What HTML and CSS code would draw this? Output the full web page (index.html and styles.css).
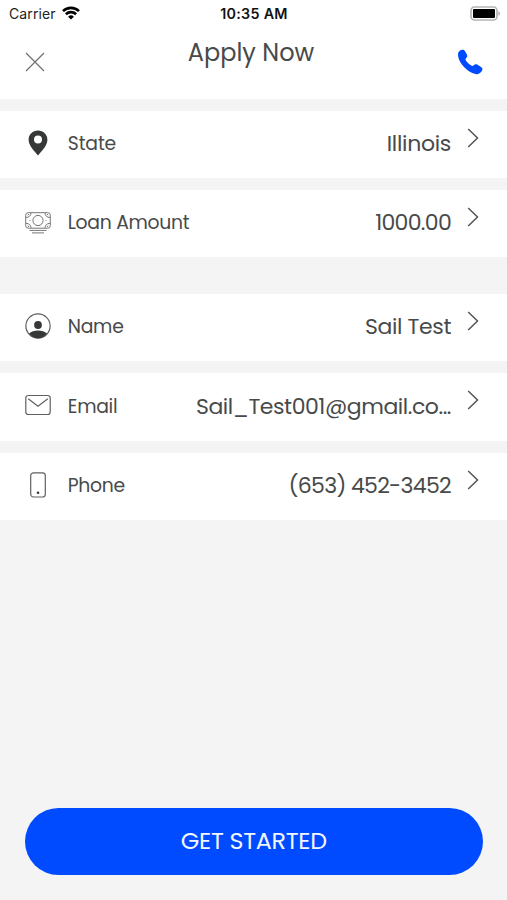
FILE: index.html
```html
<!DOCTYPE html>
<html lang="en">
<head>
<meta charset="utf-8">
<title>Apply Now</title>
<link rel="stylesheet" href="styles.css">
</head>
<body>
<svg class="defs" aria-hidden="true"><symbol id="chevron" viewBox="0 0 12 20"><path d="M1.2 1l9.3 9-9.3 9"/></symbol></svg>
<main class="screen">
  <header class="header">
    <div class="status">
      <span class="carrier">Carrier
        <svg class="wifi" viewBox="0 0 18 14"><path d="M9 13.6L6.1 10.700a4.200 4.200 0 0 1 5.800 0z"/><path class="arc" d="M3.900 8.200a7.300 7.300 0 0 1 10.200 0M1 5.100a11.500 11.500 0 0 1 16 0"/></svg>
      </span>
      <span class="clock">10:35 AM</span>
      <svg class="battery" viewBox="0 0 31 16"><rect x="1" y="1" width="26" height="13" rx="3.5" fill="#fff" stroke="#b5b5b5" stroke-width="1.7"/><rect x="3" y="3" width="22" height="9" rx="1" fill="#000"/><path d="M28.3 5.2c2.4.8 2.4 3.8 0 4.6z" fill="#b5b5b5"/></svg>
    </div>
    <div class="toolbar">
      <svg class="close" viewBox="0 0 20 20"><path d="M1 1l18 18M19 1L1 19"/></svg>
      <h1 class="title">Apply Now</h1>
      <svg class="call" viewBox="0 0 26 26"><path d="M1 5C1 3 3 1 4.800.8C6.200.5 7.300 1 7.900 2L10 5.700C10.600 7 10.200 8 9.200 9C8.400 9.900 8.300 10.500 8.900 11.500C10.300 13.600 12 15.200 14.300 16.600C15.200 17.200 15.900 17.100 16.700 16.300C17.700 15.200 19 14.900 20.200 15.600L24 17.900C25.700 18.900 25.900 20.400 24.900 21.700C23.600 23.900 21.900 25.200 19.500 25.200C15 24.800 9.700 21.300 5.700 16.600C2.700 13 .8 8.500 1 5Z"/></svg>
    </div>
  </header>
  <section class="group">
    <div class="row">
      <svg class="icon" viewBox="0 0 26 26"><path class="solid" fill-rule="evenodd" d="M13 .5c-5.300 0-9.400 4-9.400 9.200C3.600 16 10 21.500 13 25.500c3-4 9.400-9.500 9.400-15.800C22.400 4.500 18.300.5 13 .5zM13 5.600a4 4 0 1 1 0 8 4 4 0 0 1 0-8z"/></svg>
      <span class="label state">State</span><span class="value">Illinois</span>
      <svg class="chevron"><use href="#chevron"/></svg>
    </div>
    <div class="row">
      <svg class="icon money" viewBox="0 0 26 26"><rect x=".7" y="2.700" width="24.600" height="15.500" rx="2.500"/><circle cx="13" cy="10.500" r="5.100"/><path d="M1 7.500c3 0 5-2 5-4.500M25 7.500c-3 0-5-2-5-4.500M1 13.300c3 0 5 2 5 4.500M25 13.300c-3 0-5 2-5 4.500M2.800 5.200L4 4M23.200 5.200L22 4M2.800 15.700L4 17M23.200 15.700L22 17M4.500 10.500h.8M20.700 10.500h.8M4.500 20.400h17M7 22.900h12"/></svg>
      <span class="label">Loan Amount</span><span class="value amount">1000.00</span>
      <svg class="chevron"><use href="#chevron"/></svg>
    </div>
  </section>
  <section class="group">
    <div class="row">
      <svg class="icon" viewBox="0 0 26 26"><circle cx="13" cy="13" r="12.100"/><circle class="solid" cx="13" cy="12" r="3.900"/><path class="solid" d="M4 20.500c2.200-2.200 5.400-3.100 9-3.100s6.800.9 9 3.100c-2.200 3-5.400 4.700-9 4.700s-6.800-1.700-9-4.700z"/></svg>
      <span class="label">Name</span><span class="value person">Sail Test</span>
      <svg class="chevron"><use href="#chevron"/></svg>
    </div>
    <div class="row">
      <svg class="icon" viewBox="0 0 26 26"><rect x=".8" y="3.500" width="24.400" height="19" rx="2.500"/><path d="M3.200 6.700l9.800 7.600 9.800-7.600"/></svg>
      <span class="label">Email</span><span class="value address">Sail_Test001@gmail.co...</span>
      <svg class="chevron"><use href="#chevron"/></svg>
    </div>
    <div class="row">
      <svg class="icon" viewBox="0 0 26 26"><rect x="5.700" y=".8" width="14.600" height="24.200" rx="2.800"/><circle class="solid" cx="13" cy="20.700" r="1.300"/></svg>
      <span class="label">Phone</span><span class="value number">(653) 452-3452</span>
      <svg class="chevron"><use href="#chevron"/></svg>
    </div>
  </section>
  <button class="start">GET STARTED</button>
</main>
</body>
</html>
```
FILE: styles.css
```css
* { box-sizing: border-box; }
body { margin: 0; background: #f4f4f4; color: #484a4a; font-family: Poppins, Inter, sans-serif; }
.defs { position: absolute; width: 0; height: 0; }
.screen { height: 900px; display: flex; flex-direction: column; }
.header { height: 98.5px; background: #fff; }
.status { display: grid; grid-template-columns: 1fr auto 1fr; height: 28px; align-items: center; padding: 0 6px 0 9px; font-family: Inter, sans-serif; font-size: 14px; color: #222; }
.carrier { display: flex; align-items: center; gap: 6px; letter-spacing: .1px; margin-top: -1px; }
.wifi { width: 18px; height: 14px; fill: #000; margin-top: -2px; }
.arc { fill: none; stroke: #000; stroke-width: 2.6; }
.clock { font-size: 14.3px; font-weight: 600; color: #111; letter-spacing: .3px; margin: -1px 0 0 -2px; }
.battery { width: 31px; height: 16px; justify-self: end; margin-top: -1px; }
.toolbar { display: grid; grid-template-columns: 70px 1fr 70px; height: 70px; align-items: start; }
.close { width: 20px; height: 20px; margin: 24px 0 0 24.5px; fill: none; stroke: #707070; stroke-width: 1.2; }
.title { margin: 9px 5px 0 0; text-align: center; font-size: 24px; line-height: 32px; font-weight: 400; }
.call { width: 26px; height: 26px; margin: 21px 0 0 20px; fill: #004bff; }
.group { display: grid; gap: 12px; margin-top: 12px; }
.group + .group { margin-top: 36.4px; }
.row { height: 67.4px; display: flex; align-items: center; background: #fff; padding: 0 28px 0 24.5px; }
.group + .group .row { height: 67.5px; }
.icon { width: 26px; height: 26px; margin: -3px 17.3px 0 0; flex: none; fill: none; stroke: #606060; stroke-width: 1.2; }
.money { stroke: #777; stroke-width: 1; margin-top: -2px; }
.solid { fill: #363838; stroke: none; }
.label { font-size: 18.8px; line-height: 26px; letter-spacing: -.3px; margin-top: -.4px; white-space: nowrap; }
.state { letter-spacing: -.15px; }
.value { margin: -.4px 0 0 auto; font-size: 22px; line-height: 30px; letter-spacing: -.3px; white-space: nowrap; }
.person { letter-spacing: -.4px; }
.address { letter-spacing: -.45px; }
.amount, .number { letter-spacing: -.7px; }
.chevron { width: 12px; height: 20px; margin: -13px 0 0 16px; flex: none; fill: none; stroke: #555; stroke-width: 1.5; }
.start { width: 457.5px; height: 67px; margin: auto auto 24.6px 25px; padding: 0 0 2px; border: 0; border-radius: 34px; background: #004bff; color: #f2f6ff; font: inherit; font-size: 23.8px; letter-spacing: -.3px; }
```
